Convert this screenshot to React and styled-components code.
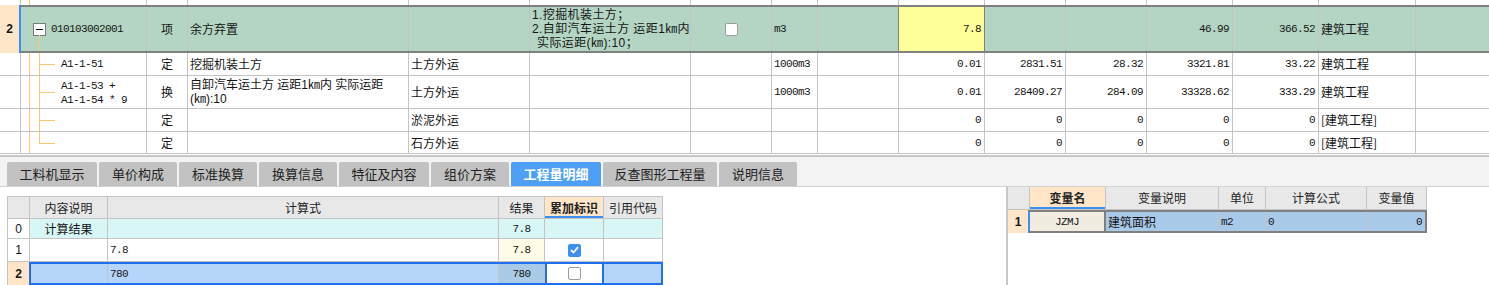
import React from "react";
import styled, { createGlobalStyle, css } from "styled-components";

const CJK = `"Noto Sans CJK SC", "Liberation Sans", sans-serif`;
const LATIN_FIRST = `"Liberation Sans", "Noto Sans CJK SC", sans-serif`;
const MONO = `"Liberation Mono", "Noto Sans CJK SC", monospace`;
const GRID = "#c4c4c4";
const DARK = "#808080";
const PEACH = "#ffe6c9";
const ORANGE = "#ffc672";
const BLUE = "#1f6ff0";

const Global = createGlobalStyle`
  html, body { margin: 0; padding: 0; background: #fff; }
  body { font-family: ${CJK}; font-size: 12px; line-height: 14px; color: #151515; }
  * { box-sizing: border-box; }
`;

const Page = styled.div`
  width: 1489px;
  height: 285px;
  overflow: hidden;
  display: flex;
  flex-direction: column;
  background: #fff;
`;

/* ---------- top grid ---------- */
const TopTable = styled.div`
  display: flex;
  flex-direction: column;
`;

const TRow = styled.div`
  display: flex;
  height: ${(p) => p.$h}px;
  border-bottom: ${(p) => (p.$noBottom ? "none" : `1px solid ${GRID}`)};
  background: #fff;
`;

const TCell = styled.div`
  flex: ${(p) => (p.$w ? `0 0 ${p.$w}px` : "1 1 auto")};
  border-right: ${(p) => (p.$noLine ? "none" : `1px solid ${p.$line || GRID}`)};
  display: flex;
  align-items: center;
  justify-content: ${(p) =>
    p.$align === "right" ? "flex-end" : p.$align === "center" ? "center" : "flex-start"};
  padding-left: ${(p) => (p.$pl != null ? p.$pl : p.$align === "left" ? 2 : 0)}px;
  padding-right: ${(p) => (p.$align === "right" ? 3 : 0)}px;
  position: relative;
  overflow: hidden;
  white-space: nowrap;
  background: ${(p) => p.$bg || "transparent"};
`;

const Num = styled.span`
  font-family: ${MONO};
  font-size: 11px;
  letter-spacing: -0.6px;
  white-space: pre;
  line-height: 14px;
`;

const Lines = styled.div`
  display: flex;
  flex-direction: column;
  font-family: ${LATIN_FIRST};
  line-height: 14px;
  font-size: ${(p) => p.$fs || 12}px;
  letter-spacing: ${(p) => p.$ls || 0}px;
`;

const Line = styled.div`
  height: 14px;
  line-height: 14px;
  padding-left: ${(p) => p.$pl || 0}px;
`;

const TreeV = styled.span`
  position: absolute;
  left: ${(p) => p.$x}px;
  top: ${(p) => (p.$fromBox ? "calc(50% + 6px)" : "0")};
  width: 1px;
  height: ${(p) => (p.$fromBox ? "calc(50% - 6px)" : p.$half ? "50%" : "100%")};
  background: ${ORANGE};
`;

const TreeH = styled.span`
  position: absolute;
  left: ${(p) => p.$x}px;
  top: 50%;
  width: ${(p) => p.$len}px;
  height: 1px;
  background: ${ORANGE};
`;

const Collapse = styled.span`
  position: absolute;
  left: 12px;
  top: calc(50% - 6px);
  width: 13px;
  height: 13px;
  border: 1px solid #7a7a7a;
  background: #fff;
  &::after {
    content: "";
    position: absolute;
    left: 2px;
    right: 2px;
    top: 5px;
    height: 1px;
    background: #111;
  }
`;

const MainRow = styled.div`
  display: flex;
  height: 48px;
`;

const MainNum = styled.div`
  flex: 0 0 19px;
  background: ${PEACH};
  display: flex;
  align-items: center;
  justify-content: center;
  font-family: "Liberation Sans", sans-serif;
  font-weight: bold;
  font-size: 12px;
`;

const MainMarker = styled.div`
  flex: 0 0 2px;
  background: #3f8ef0;
`;

const MainBody = styled.div`
  flex: 1;
  display: flex;
  background: #b4d5c4;
  border-top: 2px solid ${DARK};
  border-bottom: 2px solid ${DARK};
`;

const Check = styled.span`
  width: 13px;
  height: 13px;
  border-radius: 2px;
  display: inline-flex;
  align-items: center;
  justify-content: center;
  background: ${(p) => (p.$on ? "#3d8ff2" : "#fff")};
  border: 1px solid ${(p) => (p.$on ? "#3d8ff2" : "#9c9c9c")};
`;

const Gap = styled.div`
  height: 3px;
  border-top: 1px solid #fff;
  background: #c6c6c6;
`;

/* ---------- tabs ---------- */
const TabStrip = styled.div`
  height: 30px;
  background: #f3f3f3;
  border-bottom: 1px solid #d2d2d2;
  display: flex;
  align-items: flex-end;
  gap: 2px;
  padding-left: 7px;
`;

const Tab = styled.div`
  flex: 0 0 ${(p) => p.$w}px;
  height: 24px;
  border-radius: 2px 2px 0 0;
  background: ${(p) => (p.$active ? "#4ea0f7" : "#c2c2c2")};
  color: ${(p) => (p.$active ? "#fff" : "#222")};
  font-weight: ${(p) => (p.$active ? "bold" : "normal")};
  font-size: 13px;
  display: flex;
  align-items: center;
  justify-content: center;
`;

/* ---------- bottom ---------- */
const Bottom = styled.div`
  flex: 1;
  display: flex;
`;

const LeftPane = styled.div`
  flex: 0 0 1006px;
  padding: 9px 0 0 7px;
`;

const Divider = styled.div`
  flex: 0 0 2px;
  background: #c8c8c8;
`;

const RightPane = styled.div`
  flex: 1;
`;

const GTable = styled.div`
  width: ${(p) => p.$w}px;
  display: flex;
  flex-direction: column;
  ${(p) =>
    p.$framed &&
    css`
      border-left: 1px solid ${GRID};
      border-top: 1px solid ${GRID};
    `}
`;

const GRow = styled.div`
  display: flex;
  height: ${(p) => p.$h}px;
  border-bottom: ${(p) => (p.$noBottom ? "none" : `1px solid ${GRID}`)};
  background: ${(p) => p.$bg || "#fff"};
`;

const HCell = styled.div`
  flex: 0 0 ${(p) => p.$w}px;
  border-right: 1px solid ${GRID};
  display: flex;
  align-items: center;
  justify-content: center;
  background: ${(p) => (p.$hl ? PEACH : "#e8e8e8")};
  font-weight: ${(p) => (p.$hl ? "bold" : "normal")};
  color: #222;
  ${(p) =>
    p.$hl &&
    css`
      box-shadow: inset 0 -2px 0 #3d8ff2;
    `}
`;

const GCell = styled.div`
  flex: ${(p) => (p.$w ? `0 0 ${p.$w}px` : "1 1 auto")};
  border-right: ${(p) => (p.$noLine ? "none" : `1px solid ${p.$line || GRID}`)};
  ${(p) => p.$thick && css`border-right: 2px solid ${DARK};`}
  display: flex;
  align-items: center;
  justify-content: ${(p) =>
    p.$align === "right" ? "flex-end" : p.$align === "center" ? "center" : "flex-start"};
  padding-left: ${(p) => (p.$align === "left" ? 2 : 0)}px;
  padding-right: ${(p) => (p.$align === "right" ? 3 : 0)}px;
  background: ${(p) => p.$bg || "transparent"};
  white-space: nowrap;
  overflow: hidden;
  ${(p) =>
    p.$current &&
    css`
      box-shadow: inset 2px 0 0 ${BLUE}, inset -2px 0 0 ${BLUE};
    `}
`;

const RowNo = styled.div`
  flex: 0 0 ${(p) => p.$w}px;
  border-right: ${(p) => (p.$line ? `1px solid ${GRID}` : "none")};
  display: flex;
  align-items: center;
  justify-content: center;
  background: ${(p) => (p.$active ? PEACH : p.$head ? "#e8e8e8" : "#fff")};
  font-family: "Liberation Sans", sans-serif;
  font-weight: ${(p) => (p.$active ? "bold" : "normal")};
  font-size: 12px;
`;

const SelBody = styled.div`
  flex: 1;
  display: flex;
  background: ${(p) => p.$bg};
  border: 2px solid ${(p) => p.$border};
  ${(p) => p.$lead && css`border-left-color: ${p.$lead};`}
`;

/* ---------- data ---------- */
const W = [21, 126, 41, 221, 121, 161, 81, 46, 81, 86, 81, 81, 86, 86, 97];

const children = [
  {
    h: 23,
    code: "A1-1-51",
    type: "定",
    name: "挖掘机装土方",
    c4: "土方外运",
    unit: "1000m3",
    v: ["0.01", "2831.51", "28.32", "3321.81", "33.22"],
    c14: "建筑工程",
  },
  {
    h: 33,
    code: ["A1-1-53 +", "A1-1-54 * 9"],
    type: "换",
    name: ["自卸汽车运土方 运距1㎞内  实际运距", "(㎞):10"],
    c4: "土方外运",
    unit: "1000m3",
    v: ["0.01", "28409.27", "284.09", "33328.62", "333.29"],
    c14: "建筑工程",
  },
  { h: 23, type: "定", c4: "淤泥外运", v: ["0", "0", "0", "0", "0"], c14: "[建筑工程]" },
  { h: 22, type: "定", c4: "石方外运", v: ["0", "0", "0", "0", "0"], c14: "[建筑工程]", last: true },
];

const tabs = [
  ["工料机显示", 90],
  ["单价构成", 78],
  ["标准换算", 78],
  ["换算信息", 78],
  ["特征及内容", 90],
  ["组价方案", 78],
  ["工程量明细", 90, true],
  ["反查图形工程量", 114],
  ["说明信息", 78],
];

const CheckMark = () => (
  <svg width="9" height="8" viewBox="0 0 9 8">
    <path d="M1 4.2 L3.5 6.5 L8 1.2" fill="none" stroke="#fff" strokeWidth="1.8" />
  </svg>
);

function ChildRow({ r }) {
  return (
    <TRow $h={r.h}>
      <TCell $w={W[0]} />
      <TCell $w={W[1]} $pl={40}>
        <TreeV $x={8} />
        <TreeV $x={18} $half={r.last} />
        <TreeH $x={18} $len={16} />
        {r.code &&
          (Array.isArray(r.code) ? (
            <Lines>
              {r.code.map((c) => (
                <Line key={c}>
                  <Num>{c}</Num>
                </Line>
              ))}
            </Lines>
          ) : (
            <Num>{r.code}</Num>
          ))}
      </TCell>
      <TCell $w={W[2]} $align="center">{r.type}</TCell>
      <TCell $w={W[3]} $align="left">
        {Array.isArray(r.name) ? (
          <Lines>
            {r.name.map((n) => (
              <Line key={n}>{n}</Line>
            ))}
          </Lines>
        ) : (
          r.name
        )}
      </TCell>
      <TCell $w={W[4]} $align="left">{r.c4}</TCell>
      <TCell $w={W[5]} />
      <TCell $w={W[6]} />
      <TCell $w={W[7]} $align="left">
        {r.unit && <Num>{r.unit}</Num>}
      </TCell>
      <TCell $w={W[8]} />
      {r.v.map((v, i) => (
        <TCell key={i} $w={W[9 + i]} $align="right">
          <Num>{v}</Num>
        </TCell>
      ))}
      <TCell $w={W[14]} $align="left">{r.c14}</TCell>
      <TCell $noLine />
    </TRow>
  );
}

export default function App() {
  return (
    <Page>
      <Global />
      <TopTable>
        <TRow $h={5} $noBottom>
          <TCell $w={W[0]} />
          <TCell $w={W[1]}>
            <TreeV $x={8} />
          </TCell>
          {W.slice(2).map((w, i) => (
            <TCell key={i} $w={w} />
          ))}
          <TCell $noLine />
        </TRow>

        <MainRow>
          <MainNum>2</MainNum>
          <MainMarker />
          <MainBody>
            <TCell $w={W[1]} $pl={30}>
              <Collapse />
              <TreeV $x={18} $fromBox />
              <Num>010103002001</Num>
            </TCell>
            <TCell $w={W[2]} $align="center">项</TCell>
            <TCell $w={W[3]} $align="left">余方弃置</TCell>
            <TCell $w={W[4]} />
            <TCell $w={W[5]} $align="left">
              <Lines $fs={12} $ls={0.4}>
                <Line>1.挖掘机装土方；</Line>
                <Line>2.自卸汽车运土方 运距1㎞内</Line>
                <Line $pl={5}>实际运距(㎞):10；</Line>
              </Lines>
            </TCell>
            <TCell $w={W[6]} $align="center">
              <Check />
            </TCell>
            <TCell $w={W[7]} $align="left">
              <Num>m3</Num>
            </TCell>
            <TCell $w={W[8]} $line={DARK} />
            <TCell $w={W[9]} $line={DARK} $align="right" $bg="#ffff99">
              <Num>7.8</Num>
            </TCell>
            <TCell $w={W[10]} />
            <TCell $w={W[11]} />
            <TCell $w={W[12]} $align="right">
              <Num>46.99</Num>
            </TCell>
            <TCell $w={W[13]} $align="right">
              <Num>366.52</Num>
            </TCell>
            <TCell $w={W[14]} $align="left">建筑工程</TCell>
            <TCell $noLine />
          </MainBody>
        </MainRow>

        {children.map((r, i) => (
          <ChildRow key={i} r={r} />
        ))}
      </TopTable>
      <Gap />

      <TabStrip>
        {tabs.map(([t, w, a]) => (
          <Tab key={t} $w={w} $active={a}>
            {t}
          </Tab>
        ))}
      </TabStrip>

      <Bottom>
        <LeftPane>
          <GTable $w={656} $framed>
            <GRow $h={22}>
              <RowNo $w={22} $line $head />
              <HCell $w={78}>内容说明</HCell>
              <HCell $w={391}>计算式</HCell>
              <HCell $w={46}>结果</HCell>
              <HCell $w={59} $hl>累加标识</HCell>
              <HCell $w={59}>引用代码</HCell>
            </GRow>
            <GRow $h={20} $bg="#d8f6f6">
              <RowNo $w={22} $line>0</RowNo>
              <GCell $w={78} $align="center">计算结果</GCell>
              <GCell $w={391} />
              <GCell $w={46} $align="center">
                <Num>7.8</Num>
              </GCell>
              <GCell $w={59} />
              <GCell $w={59} />
            </GRow>
            <GRow $h={23}>
              <RowNo $w={22} $line>1</RowNo>
              <GCell $w={78} />
              <GCell $w={391} $align="left">
                <Num>7.8</Num>
              </GCell>
              <GCell $w={46} $align="center" $bg="#fffde8">
                <Num>7.8</Num>
              </GCell>
              <GCell $w={59} $align="center">
                <Check $on>
                  <CheckMark />
                </Check>
              </GCell>
              <GCell $w={59} />
            </GRow>
            <GRow $h={23} $noBottom>
              <RowNo $w={21} $active>2</RowNo>
              <SelBody $bg="#b5d5fa" $border={BLUE}>
                <GCell $w={77} />
                <GCell $w={391} $align="left">
                  <Num>780</Num>
                </GCell>
                <GCell $w={46} $align="center" $bg="#a9cbe8">
                  <Num>780</Num>
                </GCell>
                <GCell $w={59} $align="center" $bg="#fff" $current $noLine>
                  <Check />
                </GCell>
                <GCell $noLine />
              </SelBody>
            </GRow>
          </GTable>
        </LeftPane>
        <Divider />
        <RightPane>
          <GTable $w={419}>
            <GRow $h={23}>
              <RowNo $w={22} $line $head />
              <HCell $w={76} $hl>变量名</HCell>
              <HCell $w={113}>变量说明</HCell>
              <HCell $w={47}>单位</HCell>
              <HCell $w={101}>计算公式</HCell>
              <HCell $w={60}>变量值</HCell>
            </GRow>
            <GRow $h={23} $noBottom>
              <RowNo $w={20} $active>1</RowNo>
              <SelBody $bg="#a9c9e9" $border={DARK} $lead="#3d8ff2">
                <GCell $w={76} $align="center" $bg="#f0ede0" $thick>
                  <Num>JZMJ</Num>
                </GCell>
                <GCell $w={113} $align="left">建筑面积</GCell>
                <GCell $w={47} $align="left">
                  <Num>m2</Num>
                </GCell>
                <GCell $w={101} $align="left">
                  <Num>0</Num>
                </GCell>
                <GCell $align="right" $noLine>
                  <Num>0</Num>
                </GCell>
              </SelBody>
            </GRow>
          </GTable>
        </RightPane>
      </Bottom>
    </Page>
  );
}
